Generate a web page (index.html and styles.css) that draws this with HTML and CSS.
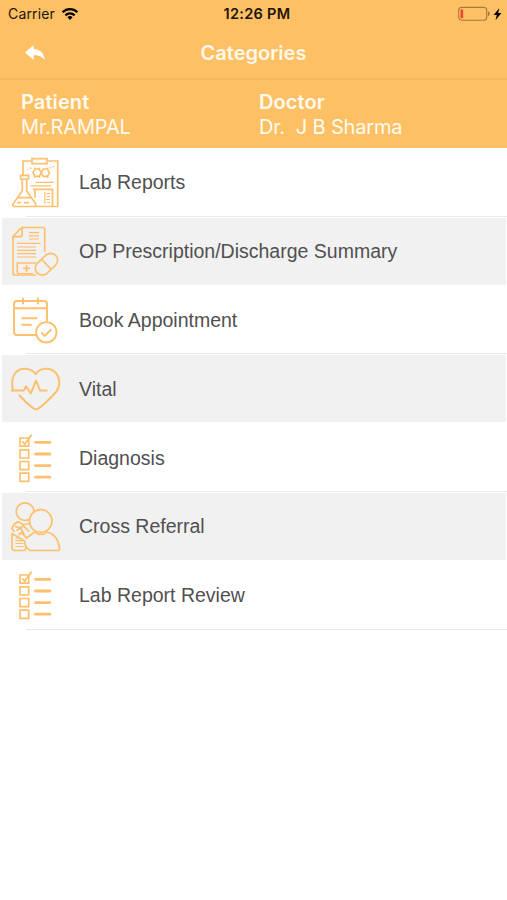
FILE: index.html
```html
<!DOCTYPE html>
<html lang="en">
<head>
<meta charset="utf-8">
<title>Categories</title>
<link rel="stylesheet" href="styles.css">
</head>
<body>
<header class="top">
  <div class="status">
    <div class="carrier"><span>Carrier</span>
      <svg class="wifi" viewBox="0 0 18 14"><path d="M1.600 5.200a10.600 10.600 0 0 1 14.800 0M4.400 8.300a6.700 6.700 0 0 1 9.200 0" fill="none" stroke="#000" stroke-width="2.300"/><path d="M6.400 10.300a3.800 3.800 0 0 1 5.200 0L9 13z"/></svg>
    </div>
    <span class="time">12:26 PM</span>
    <svg class="battery" viewBox="0 0 46 16"><rect x=".7" y="1.400" width="28" height="12.800" rx="3" fill="none" stroke="#a57b3e" stroke-width="1.100"/><path d="M30.300 5.600q2 2.200 0 4.400z" fill="#8d6b3b" stroke="#8d6b3b" stroke-width=".6"/><rect x="2.600" y="3.500" width="2.500" height="8.700" rx=".7" fill="#fb3c30"/><path d="M41.200 2.300 35.600 9h3.200l-1.300 5.200 5.900-7.200h-3.200z"/></svg>
  </div>
  <nav class="nav">
    <svg class="back" viewBox="0 0 20 16"><path d="M8.600 0v4.100c6.700.4 10.500 4.200 11.200 10.900-3-3.800-6-4.900-11.200-4.800v4.900L0 7.600z" fill="#fff"/></svg>
    <h1>Categories</h1>
  </nav>
</header>
<section class="people">
  <div class="person"><strong>Patient</strong><span>Mr.RAMPAL</span></div>
  <div class="person"><strong>Doctor</strong><span>Dr.&nbsp; J B Sharma</span></div>
</section>
<svg class="defs" width="0" height="0">
  <symbol id="checklist" viewBox="0 3 80 69">
    <g fill="none" stroke="#fec06c" stroke-width="1.700"><path d="M20 17h8.700v8.200H20zM20 28.800h8.700V37H20zM20 40.500h8.700v8.200H20zM20 52.200h8.700v8.200H20z"/><path d="m22.300 20.300 2.300 2.900 7-9.600" stroke-width="1.800"/></g>
    <path d="M35.500 21.300h14.400M35.500 33h14.400M35.500 44.600h14.400M35.500 56.200h14.400" stroke="#fec06c" stroke-width="2.800" stroke-linecap="round"/>
  </symbol>
</svg>
<ul class="list">
  <li class="row">
    <svg class="icon" viewBox="0 3 80 69">
      <path d="M31 16h-8v14M48 16h9.700v45.500H14q-1.700-.7-.9-2.700L22.300 46V34h4.400v12l8.800 12.500q1 2.200-.8 3M20.700 30.300h7.800V34h-7.800zM32 13.600h15v5H32zM17.500 52.700h13.600M17 57.700h4m3 0h5M35 53V44.300h17.500v17M33 44.300h2"/>
      <path d="M33 27.700 35 24h4.200l2 3.700-2 3.700H35zM41.200 27.700l2-3.700h4.200l2 3.700-2 3.700h-4.200z"/>
      <path class="fine" d="m35 24-.8-1.500m.8 8.900-.8 1.500M39.200 24l.8-1.500m-.8 8.900.8 1.500M47.400 24l.8-1.500m-.8 8.900.8 1.500M35.500 37.300h18.300M30.500 40.800h20.300M27 24.500h1.300m1.200-1.300h2M49.500 22.800h1.500m1.200-1.200h2M46 48.500h4M47 51.500h3M46 54.500h4M47 57.500h3M44.800 47v12"/>
    </svg>
    <span>Lab Reports</span>
  </li>
  <li class="row alt">
    <svg class="icon" viewBox="0 3 80 69">
      <path d="M36 61H15q-2 0-2-2V22.500l8.600-9h21.100q2 0 2 2v22M13.300 22.700h7q1.700 0 1.700-1.700v-7.200M17.300 59V49H36"/>
      <path class="fine" d="M29 18.700h10M29 21.800h10M29 25h10M17 29.300h23.500M17 33h19M17 36.300h19M17 39.700h19M17 43h19M17 59.500h16"/>
      <path d="M23 54.400h7M26.500 51v7"/>
      <rect x="33.700" y="43.200" width="25.500" height="14" rx="7" transform="rotate(-43 46.500 50.200)"/><path d="m41.700 45.500 9.300 9.700"/>
    </svg>
    <span>OP Prescription/Discharge Summary</span>
  </li>
  <li class="row">
    <svg class="icon" viewBox="0 3 80 69">
      <g stroke-width="1.900"><path d="M36.500 52H17q-3 0-3-3V21q0-3 3-3h27q3 0 3 3v17.500M14 25.300h33M23 14.800v6.500M38 14.800v6.500M21.500 35.300h15.800M21.500 41.700h10.200"/><circle cx="46.300" cy="49.300" r="10.200"/><path d="m41.200 49.300 3.500 3.500 6.800-6.500"/></g>
    </svg>
    <span>Book Appointment</span>
  </li>
  <li class="row alt">
    <svg class="icon" viewBox="0 3 80 69">
      <g stroke-width="2" stroke-linejoin="round" stroke-linecap="round"><path d="M11.500 38.400h12.400l2.100-4.200 4.800 7.200 5.300-12.800 4 9.800h6.600"/><path d="M12.800 37.500C11.500 31 11.500 26 15 21.500c5-6.300 15.500-6.300 20.600.6 4.800-7 15.800-7 20.800-.4 4.300 5.800 3.700 13.300-.4 18.300-3.700 4.600-13 13.200-17 16.100q-3 2.200-6 0c-4-3-9.500-8-13.500-12.600"/></g>
    </svg>
    <span>Vital</span>
  </li>
  <li class="row"><svg class="icon"><use href="#checklist"/></svg><span>Diagnosis</span></li>
  <li class="row alt">
    <svg class="icon" viewBox="0 2 80 69">
      <path d="M30.300 28.700a8.800 8.800 0 1 1 3.500-5.700"/>
      <circle cx="40.700" cy="31" r="11.300"/>
      <path d="M19 31.700q-5.500 1.300-7 7l2.500 3.300M19 31.700q2.500 3 6 2.800 2.700 0 4-1.500M15 36.500l5 1.300 3.500-1.800 5.500 5.500M12 43v15.500q.5 2 3 2h9q1.800-.5 2-3l-1.700-6.700L12 43.500M16.500 40.500l4-2.500 4 7M18.500 45l3-2.500 5 5.500 8.200-6M24.300 50.800q1.500 8 6 9.700h27.500q2 0 1.700-2.300C58.500 49 54 43.700 47 42c-3 3.300-9 3.300-12.200 0"/>
      <path class="fine" d="M15.500 48h4M15.500 50.600h7M15.500 53.500h8M15.500 56.500h8"/>
    </svg>
    <span>Cross Referral</span>
  </li>
  <li class="row"><svg class="icon"><use href="#checklist"/></svg><span>Lab Report Review</span></li>
</ul>
</body>
</html>
```
FILE: styles.css
```css
* { box-sizing: border-box; }
body { margin: 0; background: #fff; font-family: "Liberation Sans", Arial, sans-serif; }
.top { height: 80px; background: #fec064; border-bottom: 2px solid #f5b65c; font-family: Inter, sans-serif; }
.status { height: 27px; display: grid; grid-template-columns: 1fr auto 1fr; align-items: center; padding: 0 3px 0 8px; color: #1b1408; }
.carrier { display: flex; align-items: center; gap: 6px; font-size: 14px; letter-spacing: .15px; }
.wifi { width: 18px; height: 14px; }
.time { font-weight: 600; font-size: 14.500px; letter-spacing: .3px; margin-left: 2px; }
.battery { width: 46px; height: 16px; justify-self: end; }
.nav { height: 51px; display: grid; grid-template-columns: 60px 1fr 60px; align-items: center; }
.back { width: 20px; height: 16px; margin-left: 25px; }
h1 { margin: 0; text-align: center; color: #fff8e8; font-size: 20px; font-weight: 600; line-height: 24px; }
.people { height: 68px; background: #fec064; display: grid; grid-template-columns: 238px 1fr; padding: 10px 0 0 21px; color: #fffaf0; font-family: Inter, sans-serif; font-size: 20px; line-height: 25px; }
.person { display: flex; flex-direction: column; }
.person strong { font-weight: 600; letter-spacing: .1px; }
.person span { letter-spacing: -.17px; }
.defs { display: block; height: 0; }
.list { list-style: none; margin: 0; padding: 0; }
.row { height: 68.800px; display: flex; align-items: center; padding-top: 1px; color: #505050; font-size: 19.500px; background: linear-gradient(#e9e9e9, #e9e9e9) 26px 100% / 481px 1px no-repeat; }
.row.alt { background: linear-gradient(#f1f1f1, #f1f1f1) 2px 1px / 504px 67px no-repeat; }
.row span { white-space: nowrap; }
.icon { width: 80px; height: 69px; margin-right: -1px; flex: none; fill: none; stroke: #fec06c; stroke-width: 1.700; }
.fine { stroke-width: 1.200; }
```
